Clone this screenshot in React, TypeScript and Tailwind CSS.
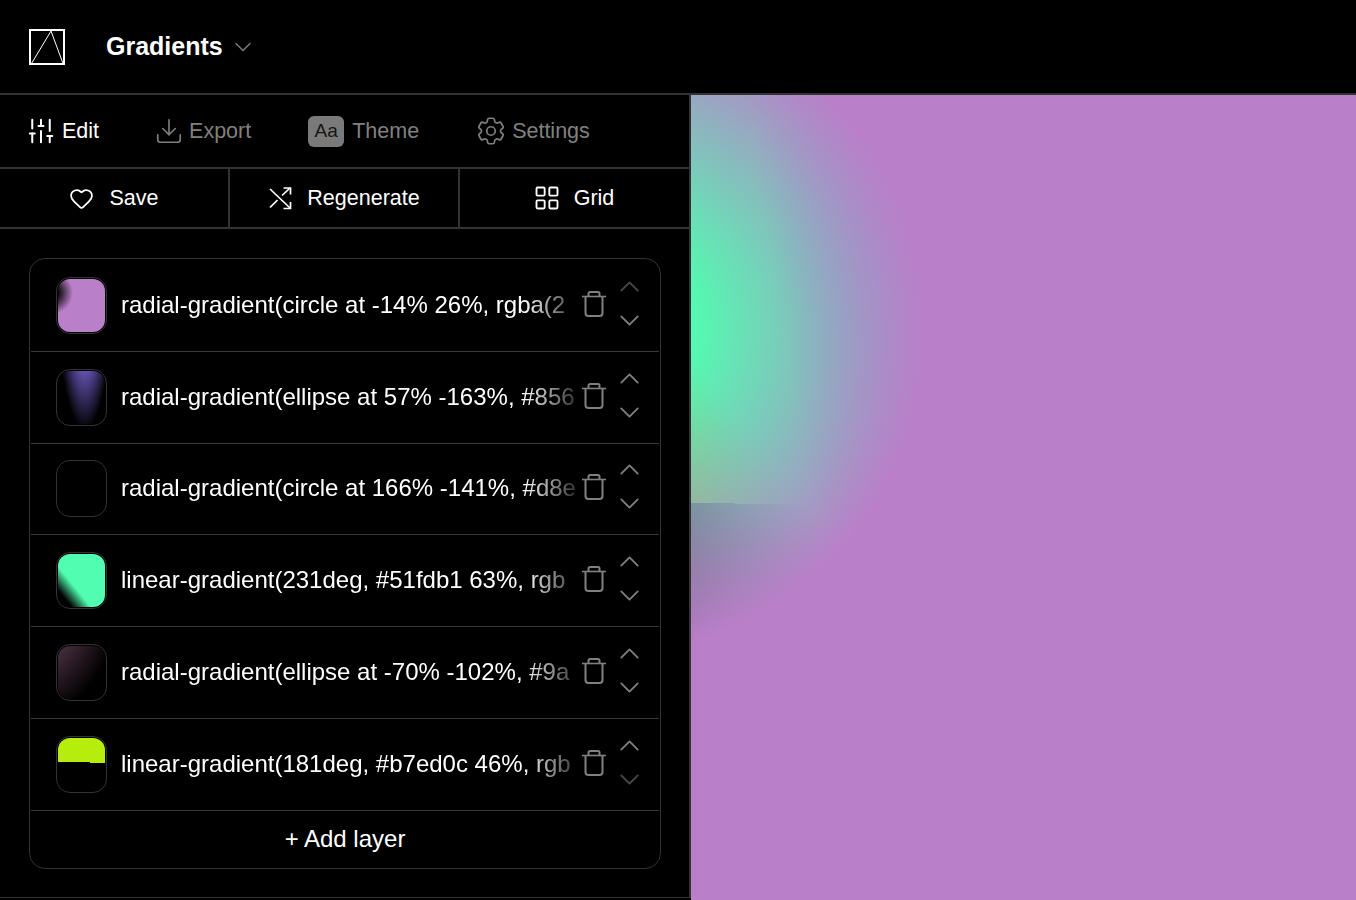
import { ChevronDown, ChevronUp, Download, Heart, LayoutGrid, SlidersVertical } from 'lucide-react';
import { HiOutlineCog6Tooth } from 'react-icons/hi2';

const layers = [
  {
    text: 'radial-gradient(circle at -14% 26%, rgba(2',
    thumb:
      'bg-[radial-gradient(circle_at_-14%_26%,rgba(186,127,201,0)_9%,#ba7fc9_32.5%)]',
  },
  {
    text: 'radial-gradient(ellipse at 57% -163%, #856',
    thumb: 'bg-[radial-gradient(ellipse_at_57%_-163%,#7f68e0_35%,rgba(127,104,224,0)_74%)]',
  },
  {
    text: 'radial-gradient(circle at 166% -141%, #d8e',
    thumb: 'bg-[radial-gradient(circle_at_166%_-141%,#d8e0a0_0%,rgba(216,224,160,0)_45%)]',
  },
  {
    text: 'linear-gradient(231deg, #51fdb1 63%, rgb',
    thumb: 'bg-[linear-gradient(231deg,#51fdb1_63%,rgba(81,253,177,0)_85%)]',
  },
  {
    text: 'radial-gradient(ellipse at -70% -102%, #9a',
    thumb: 'bg-[radial-gradient(ellipse_at_-70%_-102%,#9a6189_5%,rgba(154,97,137,0)_85%)]',
  },
  {
    text: 'linear-gradient(181deg, #b7ed0c 46%, rgb',
    thumb: 'bg-[linear-gradient(181deg,#b7ed0c_46%,#000_46%)]',
  },
];

function Logo() {
  return (
    <svg width="36" height="36" viewBox="0 0 36 36" fill="none" stroke="white">
      <rect x="1" y="1" width="34" height="34" strokeWidth="2" />
      <path d="M2.5 34.5 22 2 34 34.5" strokeWidth="1" />
    </svg>
  );
}

function ShuffleIcon() {
  return (
    <svg width="24" height="24" viewBox="0 0 24 24" fill="none" stroke="white" strokeWidth="1.7">
      <path d="M2 3 22 22" />
      <path d="M2 21.5 9.5 14" />
      <path d="M14 9.5 22 2" />
      <path d="M15.5 2H22.5V8.5" />
      <path d="M22.5 16V22.5H15.5" />
    </svg>
  );
}

function TrashIcon() {
  return (
    <svg width="24" height="26" viewBox="0 0 24 26" fill="none" stroke="#808080" strokeWidth="2" className="shrink-0">
      <path d="M0 5.5H24" strokeWidth="1.6" />
      <path d="M6.5 5V2.5C6.5 1.6 7.2 1 8 1H16C16.8 1 17.5 1.6 17.5 2.5V5" />
      <path d="M3.5 6V22C3.5 23.7 4.8 25 6.5 25H17.5C19.2 25 20.5 23.7 20.5 22V6" />
    </svg>
  );
}

function LayerRow({ text, thumb, first, last }: { text: string; thumb: string; first: boolean; last: boolean }) {
  return (
    <div className="flex h-[91.75px] items-center border-b border-[#3a3a3a] pl-[25px]">
      <div className="h-[57px] w-[51px] shrink-0 rounded-[14px] border border-[#333] p-px">
        <div className={`h-full w-full rounded-xl ${thumb}`} />
      </div>
      <div className="mb-px ml-[14px] w-[458px] shrink-0 overflow-hidden whitespace-nowrap text-[24px] text-white [mask-image:linear-gradient(90deg,#000_88%,rgba(0,0,0,0.15))]">
        {text}
      </div>
      <div className="mb-[3px] ml-[3px]">
        <TrashIcon />
      </div>
      <div className="mb-1 ml-[7px] flex flex-col">
        <ChevronUp size={33} strokeWidth={1.3} className={`my-[0.5px] ${first ? 'text-[#4a4a4a]' : 'text-[#808080]'}`} />
        <ChevronDown size={33} strokeWidth={1.3} className={`my-[0.5px] ${last ? 'text-[#4a4a4a]' : 'text-[#808080]'}`} />
      </div>
    </div>
  );
}

export default function App() {
  return (
    <div className="flex h-[900px] flex-col overflow-hidden bg-black font-['Liberation_Sans',Arial,sans-serif] text-white">
      <header className="flex h-[95px] shrink-0 items-center border-b-2 border-[#333] pl-[29px]">
        <Logo />
        <div className="ml-[41px] text-[25px] font-bold">Gradients</div>
        <ChevronDown size={28} strokeWidth={1.2} className="ml-[6px] text-[#808080]" />
      </header>

      <main className="flex min-h-0 flex-1">
        <aside className="mb-[2px] w-[691px] shrink-0 border-r-2 border-b border-[#333]">
          <nav className="flex h-[74px] items-center gap-[58px] border-b-2 border-[#333] pl-[29px] text-[21.5px] text-[#808080]">
            <button className="flex items-center gap-[9px] text-white">
              <SlidersVertical size={30} strokeWidth={1.6} className="-mx-[3px]" />
              Edit
            </button>
            <button className="flex items-center gap-2">
              <Download size={30} strokeWidth={1.3} className="-mx-[3px]" />
              Export
            </button>
            <button className="-ml-px flex items-center gap-2">
              <span className="flex h-[31px] w-9 items-center justify-center rounded-md bg-[#7a7a7a] text-[19px] text-[#161616]">
                Aa
              </span>
              Theme
            </button>
            <button className="flex items-center gap-2">
              <HiOutlineCog6Tooth size={34} strokeWidth={1.2} className="-mx-[3.5px]" />
              Settings
            </button>
          </nav>

          <div className="grid h-[60px] grid-cols-[230px_230px_1fr] border-b-2 border-[#333] text-[21.5px]">
            <button className="flex items-center justify-center gap-[15px] border-r-2 border-[#333]">
              <Heart size={25} strokeWidth={1.7} />
              Save
            </button>
            <button className="flex items-center justify-center gap-[15px] border-r-2 border-[#333]">
              <ShuffleIcon />
              Regenerate
            </button>
            <button className="flex items-center justify-center gap-[15px]">
              <LayoutGrid size={28} strokeWidth={1.6} className="-mx-[2px]" />
              Grid
            </button>
          </div>

          <div className="ml-[29px] mt-[29px] w-[632px] rounded-2xl border border-[#333] p-px">
            {layers.map((layer, i) => (
              <LayerRow key={layer.text} text={layer.text} thumb={layer.thumb} first={i === 0} last={i === layers.length - 1} />
            ))}
            <button className="flex h-[56px] w-full items-center justify-center text-[24px]">+ Add layer</button>
          </div>
        </aside>

        <section className="min-w-0 flex-1 overflow-hidden">
          <div className="h-[900px] w-full [background-image:radial-gradient(circle_at_-14%_26%,rgba(186,127,201,0)_9%,#ba7fc9_32.5%),radial-gradient(ellipse_at_57%_-163%,#7f68e0_35%,rgba(127,104,224,0)_74%),radial-gradient(circle_at_166%_-141%,#d8e0a0_0%,rgba(216,224,160,0)_45%),linear-gradient(231deg,#51fdb1_63%,rgba(81,253,177,0)_85%),radial-gradient(ellipse_at_-70%_-102%,#9a6189_5%,rgba(154,97,137,0)_85%),linear-gradient(181deg,#b7ed0c_46%,#000_46%)]" />
        </section>
      </main>
    </div>
  );
}
